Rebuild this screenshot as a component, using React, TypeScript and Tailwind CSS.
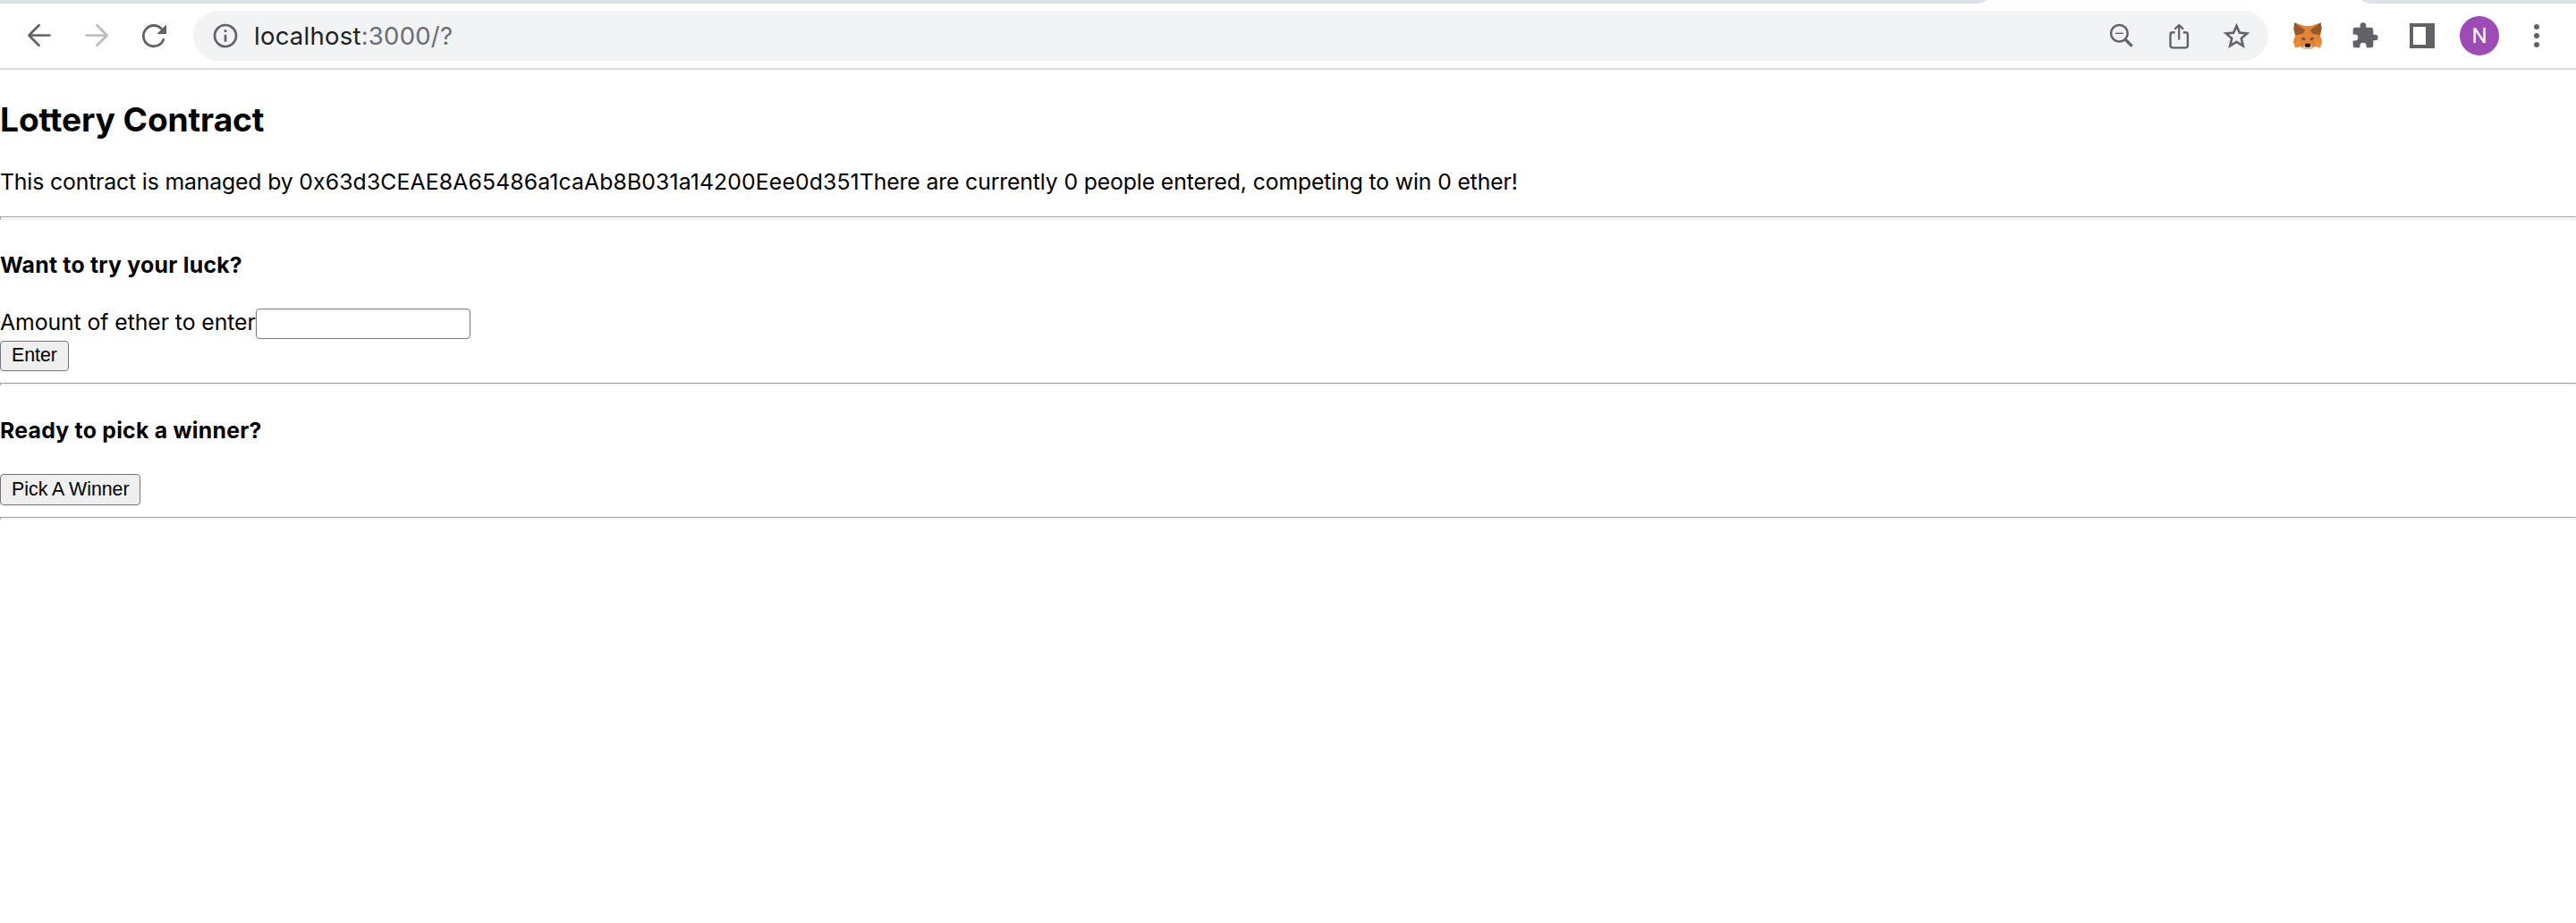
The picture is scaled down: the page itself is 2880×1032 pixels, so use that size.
import type { ReactNode } from "react";

function Slot({ children }: { children: ReactNode }) {
  return <div className="flex w-16 shrink-0 items-center justify-center">{children}</div>;
}

function ArrowIcon({ className }: { className: string }) {
  return (
    <svg className={className} width="28" height="28" viewBox="0 0 28 28" fill="none" stroke="currentColor" strokeWidth="2.7" strokeLinecap="round" strokeLinejoin="round">
      <path d="M25.4 13.5H3M13.6 2.3L2.4 13.5L13.6 24.7" />
    </svg>
  );
}

function ReloadIcon() {
  return (
    <svg width="32" height="32" viewBox="0 0 32 32" fill="none">
      <path d="M24.6 8.4A11.6 11.6 0 1 0 26.8 20.2" stroke="currentColor" strokeWidth="2.8" strokeLinecap="round" />
      <path d="M30 3.4V14H19.3Z" fill="currentColor" />
    </svg>
  );
}

function InfoIcon() {
  return (
    <svg width="32" height="32" viewBox="0 0 24 24" fill="currentColor">
      <path d="M11 7h2v2h-2zm0 4h2v6h-2zm1-9a10 10 0 1 0 0 20 10 10 0 0 0 0-20zm0 18a8 8 0 1 1 0-16 8 8 0 0 1 0 16z" />
    </svg>
  );
}

function ZoomOutIcon() {
  return (
    <svg width="32" height="32" viewBox="0 0 32 32" fill="none" stroke="currentColor">
      <circle cx="13.4" cy="13.3" r="9.3" strokeWidth="2.5" />
      <path d="M20.5 20.5L27.6 27.6" strokeWidth="3.2" />
      <path d="M9 13.3H18" strokeWidth="1.4" />
    </svg>
  );
}

function ShareIcon() {
  return (
    <svg width="32" height="32" viewBox="0 0 32 32" fill="none" stroke="currentColor" strokeWidth="2.4" strokeLinejoin="round">
      <path d="M11.6 12.3H8.9a2.4 2.4 0 0 0-2.4 2.4V27a2.4 2.4 0 0 0 2.4 2.4H23.5a2.4 2.4 0 0 0 2.4-2.4V14.7a2.4 2.4 0 0 0-2.4-2.4H20.8" />
      <path d="M16.2 20.4V4.5M11.4 8.6L16.2 4L21 8.6" strokeWidth="2.2" />
    </svg>
  );
}

function StarIcon() {
  return (
    <svg width="35" height="35" viewBox="0 0 24 24" fill="currentColor" stroke="currentColor" strokeWidth=".2">
      <path d="M22 9.24l-7.19-.62L12 2 9.19 8.63 2 9.24l5.46 4.73L5.82 21 12 17.27 18.18 21l-1.63-7.03L22 9.24zM12 15.4l-3.76 2.27 1-4.28-3.32-2.88 4.38-.38L12 6.1l1.71 4.04 4.38.38-3.32 2.88 1 4.28L12 15.4z" />
    </svg>
  );
}

function FoxIcon() {
  return (
    <svg width="32" height="30" viewBox="0 0 96 90">
      <path fill="#e58434" d="M4 1L37 12H59L92 1L95 22L90 45L96 64L90 84L72 81L60 89H36L24 81L6 84L0 64L6 45L1 22Z" />
      <path fill="#935830" d="M4 1L40 26L31 38L7 43L1 22ZM92 1L56 26L65 38L89 43L95 22Z" />
      <path fill="#d67a31" d="M24 58L37 49L40 60L30 70ZM72 58L59 49L56 60L66 70Z" />
      <path fill="#e98b38" d="M0 65L26 60L24 81L6 84ZM96 65L70 60L72 81L90 84Z" />
      <path fill="#514a4d" d="M28 50L40 54L39 60L29 57ZM68 50L56 54L57 60L67 57Z" />
      <path fill="#d8c4b2" d="M36 75H60L65 84L57 90H39L31 84Z" />
      <path fill="#161616" d="M40 71H56L58 79L54 83H42L38 79Z" />
    </svg>
  );
}

function PuzzleIcon() {
  return (
    <svg width="32" height="32" viewBox="0 0 24 24" fill="currentColor">
      <path d="M20.5 11H19V7c0-1.1-.9-2-2-2h-4V3.5a2.5 2.5 0 0 0-5 0V5H4c-1.1 0-1.99.9-1.99 2v3.8H3.5a2.7 2.7 0 0 1 0 5.4H2V20c0 1.1.9 2 2 2h3.8v-1.5a2.7 2.7 0 0 1 5.4 0V22H17c1.1 0 2-.9 2-2v-4h1.5a2.5 2.5 0 0 0 0-5z" />
    </svg>
  );
}

function BrowserBar() {
  return (
    <header className="h-[78px] border-b-2 border-[#dadcdd] bg-white text-[#5f6368]">
      <div className="flex h-1 justify-between">
        <div className="w-[2220px] rounded-br-[12px_4px] bg-[#dee1e6]" />
        <div className="w-[239px] rounded-bl-[12px_4px] bg-[#dee1e6]" />
      </div>
      <div className="flex h-[72px] items-center px-3">
        <Slot><ArrowIcon className="" /></Slot>
        <Slot><ArrowIcon className="-scale-x-100 text-[#babcbe]" /></Slot>
        <Slot><ReloadIcon /></Slot>
        <div className="mx-3 flex h-14 flex-1 items-center rounded-full bg-[#f1f3f4] px-1">
          <Slot><InfoIcon /></Slot>
          <div className="flex-1 font-['Inter'] text-[27.5px] leading-8 tracking-[0.24px] whitespace-pre text-[#6a6d71]">
            <span className="text-[#202124]">localhost</span>:3000/?
          </div>
          <Slot><ZoomOutIcon /></Slot>
          <Slot><ShareIcon /></Slot>
          <Slot><StarIcon /></Slot>
        </div>
        <Slot><FoxIcon /></Slot>
        <Slot><PuzzleIcon /></Slot>
        <Slot>
          <div className="h-7 w-7 border-y-4 border-r-10 border-l-4 border-[#5f6368]" />
        </Slot>
        <Slot>
          <div className="flex h-11 w-11 items-center justify-center rounded-full bg-[#9d4bb5] font-['Roboto'] text-[24px] text-white">N</div>
        </Slot>
        <Slot>
          <div className="flex flex-col gap-1">
            <i className="h-1.5 w-1.5 rounded-full bg-[#5f6368]" />
            <i className="h-1.5 w-1.5 rounded-full bg-[#5f6368]" />
            <i className="h-1.5 w-1.5 rounded-full bg-[#5f6368]" />
          </div>
        </Slot>
      </div>
    </header>
  );
}

const rule = "border border-t-[#9a9a9a] border-l-[#9a9a9a] border-r-[#eeeeee] border-b-[#eeeeee]";
const button =
  "block rounded-[4px] border border-[#767676] bg-[#efefef] text-left font-['Liberation_Sans'] text-[21.33px] text-black";

export default function App() {
  return (
    <div className="min-h-[1032px] w-[2880px] bg-white font-['Inter'] text-[24.8px] leading-[30px] text-black">
      <BrowserBar />
      <main>
        <h2 className="mt-[33px] text-[37.2px] leading-[46px] font-bold tracking-[-0.12px]">Lottery Contract</h2>
        <p className="mt-[31px]">
          <span className="tracking-[-0.16px]">This contract is managed by </span>
          <span className="tracking-[0.11px]">0x63d3CEAE8A65486a1caAb8B031a14200Eee0d351</span>
          <span className="tracking-[-0.145px]">There are currently 0 people entered, competing to win 0 ether!</span>
        </p>
        <hr className={`mt-6 h-1 ${rule}`} />
        <form onSubmit={(e) => e.preventDefault()}>
          <h4 className="mt-[35px] font-bold tracking-[0.25px]">Want to try your luck?</h4>
          <div className="mt-[34px] flex h-[34px] items-start">
            <label htmlFor="amount" className="w-[286px] tracking-[-0.08px] whitespace-nowrap">Amount of ether to enter</label>
            <input id="amount" className="h-[34px] w-60 rounded-[4px] border border-[#767676] bg-white px-1 text-[21.33px] outline-none" />
          </div>
          <button className={`mt-0.5 h-[34px] w-[77px] pb-px pl-3 leading-[31px] ${button}`}>Enter</button>
        </form>
        <hr className={`mt-[13px] h-[3px] ${rule}`} />
        <h4 className="mt-[35px] font-bold tracking-[0.25px]">Ready to pick a winner?</h4>
        <button className={`mt-[34px] h-[35px] w-[157px] pb-px pl-3 leading-[32px] ${button}`}>Pick A Winner</button>
        <hr className={`mt-[13px] h-[3px] ${rule}`} />
      </main>
    </div>
  );
}
